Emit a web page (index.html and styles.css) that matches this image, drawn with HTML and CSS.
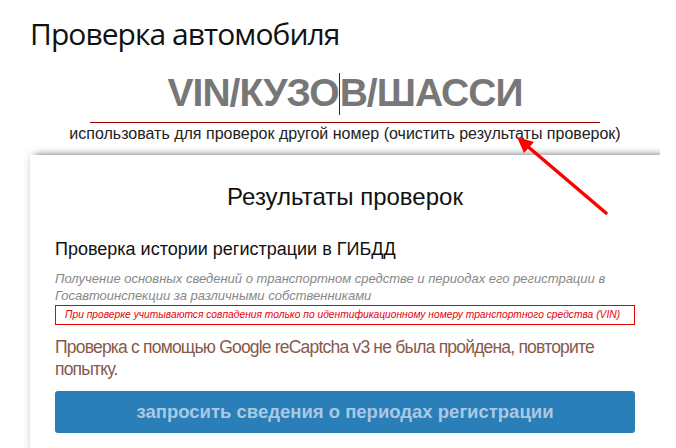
FILE: index.html
```html
<!DOCTYPE html>
<html lang="ru">
<head>
    <meta charset="UTF-8">
    <meta name="viewport" content="width=device-width, initial-scale=1.0">
    <title>Проверка автомобиля</title>
    <link rel="stylesheet" href="styles.css">
</head>
<body>
    <div class="page">
        <h1 class="title">Проверка автомобиля</h1>

        <div class="search">
            <div class="vin-field">
                <span>VIN/КУЗО</span><span class="caret"></span><span>В/ШАССИ</span>
            </div>
            <a class="clear-link" href="#">использовать для проверок другой номер (очистить результаты проверок)</a>
        </div>

        <div class="card">
            <h2>Результаты проверок</h2>
            <h3>Проверка истории регистрации в ГИБДД</h3>
            <p class="desc">Получение основных сведений о транспортном средстве и периодах его регистрации в Госавтоинспекции за различными собственниками</p>
            <div class="notice">При проверке учитываются совпадения только по идентификационному номеру транспортного средства (VIN)</div>
            <p class="error">Проверка с помощью Google reCaptcha v3 не была пройдена, повторите попытку.</p>
            <button class="request-btn" type="button">запросить сведения о периодах регистрации</button>
        </div>

        <!-- annotation arrow pointing at the clear link -->
        <svg class="arrow" width="676" height="448" viewBox="0 0 676 448">
            <line x1="606" y1="213" x2="526" y2="145" stroke="#f00" stroke-width="3.5" stroke-linecap="round"/>
            <polygon points="517,137 534,142 524,153" fill="#f00"/>
        </svg>
    </div>
</body>
</html>
```

FILE: styles.css
```css
/* General body styling */
body {
    margin: 0;
    background-color: #fff;
    font-family: 'Liberation Sans', Arial, sans-serif;
    color: #222;
}

.page {
    position: relative;
    width: 630px;
    padding: 16px 0 0 30px;
    height: 432px;
    overflow: hidden;
}

/* Page header */
.title {
    margin: 0;
    font-family: 'Open Sans', sans-serif;
    font-weight: 400;
    font-size: 30px;
    line-height: 36px;
    letter-spacing: -0.95px;
    color: #111;
}

/* VIN input and clear link */
.search {
    display: flex;
    flex-direction: column;
    align-items: center;
    padding-top: 18px;
}

.vin-field {
    display: flex;
    justify-content: center;
    width: 510px;
    padding-bottom: 7px;
    border-bottom: 1px solid #900;
    font-weight: 700;
    font-size: 39px;
    line-height: 45px;
    letter-spacing: -1px;
    color: #777;
}

.caret {
    width: 1px;
    margin: 3px 0 0;
    background-color: #8b0000;
}

.clear-link {
    margin-top: 2px;
    font-size: 16px;
    line-height: 18px;
    color: #222;
    text-decoration: none;
}

/* Results card */
.card {
    margin-top: 12px;
    padding: 28px 25px 20px;
    background-color: #fff;
    box-shadow: 6px 1px 8px rgba(0, 0, 0, 0.65), 0 0 8px rgba(0, 0, 0, 0.12);
}

.card h2 {
    margin: 0;
    text-align: center;
    font-weight: 400;
    font-size: 24px;
    line-height: 28px;
    color: #111;
}

.card h3 {
    margin: 27px 0 0;
    font-weight: 400;
    font-size: 18px;
    line-height: 22px;
    color: #111;
}

.desc {
    margin: 10px 0 0;
    font-style: italic;
    font-size: 13px;
    line-height: 17px;
    color: #888;
}

.notice {
    margin-top: 1px;
    padding: 0 9px;
    border: 1px solid #e00;
    font-style: italic;
    font-size: 10.25px;
    line-height: 18px;
    color: #e8000b;
}

.error {
    margin: 11px 0 0;
    font-size: 17.5px;
    line-height: 22px;
    letter-spacing: -0.8px;
    color: #875a4b;
}

.request-btn {
    display: block;
    width: 100%;
    height: 42px;
    margin-top: 11px;
    border: none;
    border-radius: 3px;
    background-color: #2a7fb8;
    font-family: 'Liberation Sans', Arial, sans-serif;
    font-weight: 700;
    font-size: 18.5px;
    color: #a9c9e2;
}

/* Annotation overlay */
.arrow {
    position: absolute;
    top: 0;
    left: 0;
    pointer-events: none;
}
```
